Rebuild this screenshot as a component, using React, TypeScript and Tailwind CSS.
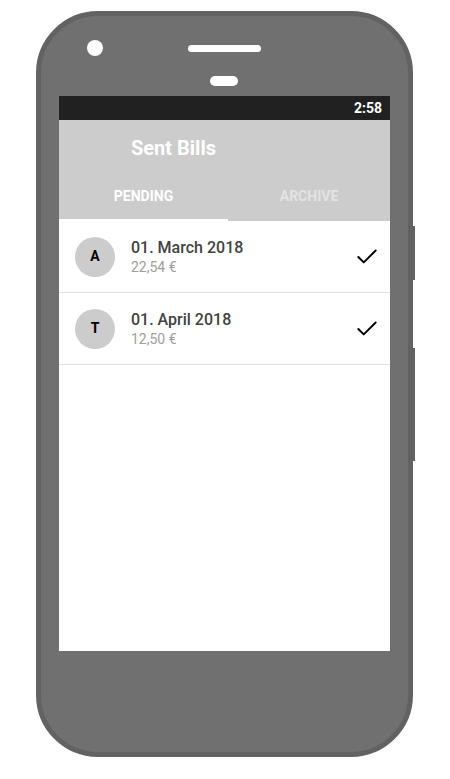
import React from 'react';
import { Check } from 'lucide-react';

const bills = [
  { initial: 'A', date: '01. March 2018', amount: '22,54 €' },
  { initial: 'T', date: '01. April 2018', amount: '12,50 €' },
];

const BillRow: React.FC<{ initial: string; date: string; amount: string }> = ({ initial, date, amount }) => (
  <div className="flex items-center h-[72px] pl-4 pr-[10px] border-b border-[#e0e0e0]">
    <div className="w-10 h-10 rounded-full bg-[#cccccc] flex items-center justify-center text-[14px] font-bold text-black">
      {initial}
    </div>
    <div className="flex-1 ml-4 flex flex-col pt-[1px]">
      <span className="text-[16px] font-medium text-[#424242] leading-[20px]">{date}</span>
      <span className="text-[14px] text-[#9e9e9e] leading-[18px]">{amount}</span>
    </div>
    <Check size={26} strokeWidth={1.8} className="text-black" />
  </div>
);

export default function App() {
  return (
    <div className="w-[450px] h-[779px] bg-white font-['Roboto',sans-serif] pt-[11px] pl-[36px] flex items-start">
      {/* phone body */}
      <div className="w-[377px] h-[746px] rounded-[62px] border-[5px] border-[#626262] bg-[#707070] flex flex-col">
        <div className="h-[80px] flex flex-col">
          <div className="flex items-center pt-[24px] pl-[46px]">
            <div className="w-4 h-4 rounded-full bg-white" />
            <div className="ml-[85px] w-[73px] h-[7px] rounded-full bg-white" />
          </div>
          <div className="ml-[169px] mt-[20px] w-[28px] h-[10px] rounded-full bg-white" />
        </div>

        {/* screen */}
        <div className="ml-[18px] w-[331px] h-[555px] bg-white flex flex-col">
          <div className="h-6 bg-[#212121] flex items-center justify-end pr-2">
            <span className="text-[14px] font-bold text-white">2:58</span>
          </div>
          <div className="bg-[#cccccc]">
            <div className="h-[52px] flex items-end pl-[72px] pb-[12px]">
              <span className="text-[20px] font-bold text-white leading-[24px]">Sent Bills</span>
            </div>
            <div className="flex h-[49px]">
              <div className="w-[169px] flex flex-col">
                <div className="flex-1 flex items-center justify-center text-[14px] font-bold text-white pt-[2px]">PENDING</div>
                <div className="h-[2px] bg-white" />
              </div>
              <div className="flex-1 flex items-center justify-center text-[14px] font-bold text-[#e3e3e3]">
                ARCHIVE
              </div>
            </div>
          </div>
          {bills.map((b) => (
            <BillRow key={b.date} {...b} />
          ))}
        </div>
      </div>

      {/* side buttons */}
      <div className="flex flex-col">
        <div className="mt-[215px] w-[2px] h-[54px] bg-[#626262]" />
        <div className="mt-[68px] w-[2px] h-[113px] bg-[#626262]" />
      </div>
    </div>
  );
}
